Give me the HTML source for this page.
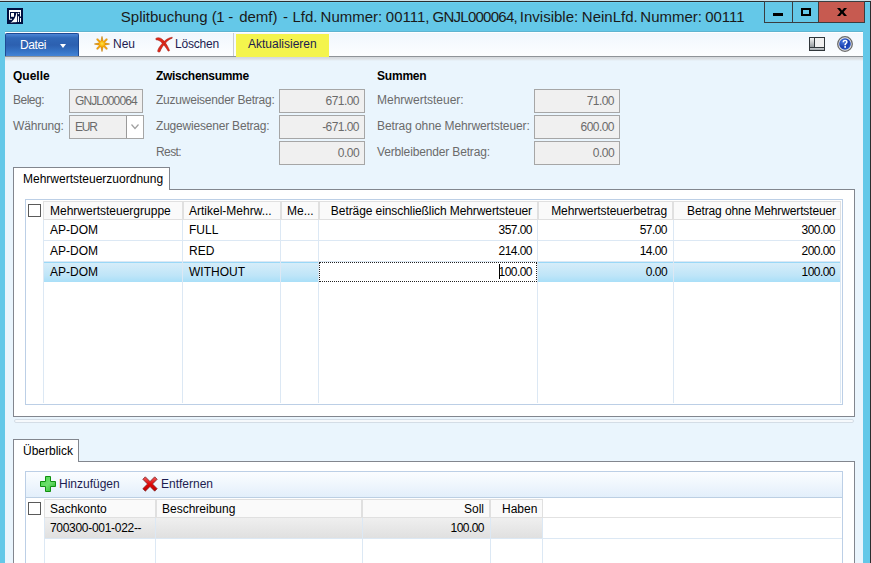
<!DOCTYPE html>
<html><head><meta charset="utf-8">
<style>
*{box-sizing:border-box;margin:0;padding:0}
html,body{width:871px;height:563px;overflow:hidden}
body{position:relative;background:#64c8e8;font-family:"Liberation Sans",sans-serif;font-size:12px;color:#000}
.a{position:absolute}
.t{position:absolute;white-space:nowrap;line-height:14px}
.lbl{color:#6b6b6b}
.fld{position:absolute;background:#f0f0f0;border:1px solid #a6a6a6;height:24px}
.fld span{position:absolute;right:5px;top:4px;line-height:14px;color:#6b6b6b;white-space:nowrap}
.hd{color:#000;font-weight:bold}
.tb{color:#1c1c50}
</style></head><body>
<div class="a" style="left:0px;top:0px;width:871px;height:1px;background:#cfdfe5;"></div>
<div class="a" style="left:0px;top:1px;width:871px;height:1px;background:#2b2d2f;"></div>
<div class="a" style="left:0px;top:2px;width:871px;height:1px;background:#6ad2f2;"></div>
<div class="a" style="left:870px;top:1px;width:1px;height:562px;background:#2b2d2f;"></div>
<svg class="a" style="left:7px;top:8px" width="16" height="16" viewBox="0 0 16 16">
<rect width="16" height="16" fill="#001040"/>
<path d="M2 2H14V8.6H13V4H3V10.8H5V11.8H2Z" fill="#fff"/>
<rect x="4" y="5" width="3" height="3.8" fill="#fff"/>
<path d="M3.2 14.8C5.8 13.6 8.2 10.5 9.4 5L10 5L10.2 13.9C8 14 5.2 14.4 3.2 14.8Z" fill="#fff"/>
<circle cx="11.5" cy="5.5" r="0.8" fill="#fff"/>
<rect x="11" y="8.3" width="1" height="5.7" fill="#fff"/>
<rect x="13" y="10" width="1" height="4" fill="#fff"/>
</svg>
<div class="t" style="left:120.8px;top:8px;font-size:15px;line-height:18px;color:#1a1a1a;letter-spacing:0px">Splitbuchung</div>
<div class="t" style="left:211.8px;top:8px;font-size:15px;line-height:18px;color:#1a1a1a;letter-spacing:-0.5px">(1</div>
<div class="t" style="left:228.3px;top:8px;font-size:15px;line-height:18px;color:#1a1a1a;letter-spacing:0px">-</div>
<div class="t" style="left:239.2px;top:8px;font-size:15px;line-height:18px;color:#1a1a1a;letter-spacing:0px">demf)</div>
<div class="t" style="left:283px;top:8px;font-size:15px;line-height:18px;color:#1a1a1a;letter-spacing:0px">-</div>
<div class="t" style="left:292.4px;top:8px;font-size:15px;line-height:18px;color:#1a1a1a;letter-spacing:0px">Lfd.</div>
<div class="t" style="left:320.6px;top:8px;font-size:15px;line-height:18px;color:#1a1a1a;letter-spacing:0px">Nummer:</div>
<div class="t" style="left:385.8px;top:8px;font-size:15px;line-height:18px;color:#1a1a1a;letter-spacing:0px">00111,</div>
<div class="t" style="left:432.6px;top:8px;font-size:15px;line-height:18px;color:#1a1a1a;letter-spacing:-0.75px">GNJL000064,</div>
<div class="t" style="left:519.8px;top:8px;font-size:15px;line-height:18px;color:#1a1a1a;letter-spacing:0px">Invisible:</div>
<div class="t" style="left:581.8px;top:8px;font-size:15px;line-height:18px;color:#1a1a1a;letter-spacing:0px">NeinLfd.</div>
<div class="t" style="left:640.3px;top:8px;font-size:15px;line-height:18px;color:#1a1a1a;letter-spacing:0px">Nummer:</div>
<div class="t" style="left:705.2px;top:8px;font-size:15px;line-height:18px;color:#1a1a1a;letter-spacing:0px">00111</div>
<div class="a" style="left:764px;top:1px;width:101px;height:22px;background:#3a3d40;"></div>
<div class="a" style="left:765px;top:2px;width:27px;height:20px;background:#64c8e8;"></div>
<div class="a" style="left:793px;top:2px;width:25px;height:20px;background:#64c8e8;"></div>
<div class="a" style="left:819px;top:2px;width:45px;height:20px;background:#c75a50;"></div>
<div class="a" style="left:773px;top:13px;width:10px;height:3px;background:#000;"></div>
<div class="a" style="left:801px;top:8px;width:10px;height:8px;background:transparent;border:2px solid #000;"></div>
<svg class="a" style="left:837px;top:8px" width="10" height="8" viewBox="0 0 10 8"><path d="M0 0H3L5 2.6L7 0H10L6.6 4L10 8H7L5 5.4L3 8H0L3.4 4Z" fill="#000"/></svg>
<div class="a" style="left:5px;top:31px;width:858px;height:1px;background:#5fb4d0;"></div>
<div class="a" style="left:5px;top:32px;width:858px;height:25px;background:linear-gradient(#f1f7fd,#fdfeff);border-top:1px solid #fff;"></div>
<div class="a" style="left:5px;top:56px;width:858px;height:1px;background:#8e9398;"></div>
<div class="a" style="left:5px;top:57px;width:858px;height:506px;background:#eaf5fd;"></div>
<div class="a" style="left:5px;top:57px;width:858px;height:4px;background:linear-gradient(#d3d7db,#dde1e5 50%,#eaf5fd);"></div>
<div class="a" style="left:5px;top:33px;width:74px;height:23px;background:linear-gradient(#4c86d6 0%,#3068b8 18%,#2c60b0 50%,#3674c6 80%,#4484d6 100%);border:1px solid #1e4a94;border-bottom:none;border-radius:2px 2px 0 0;"></div>
<div class="t" style="left:20px;top:38px;color:#fff;letter-spacing:-0.4px">Datei</div>
<div class="a" style="left:60px;top:44px;width:0;height:0;border-left:3.5px solid transparent;border-right:3.5px solid transparent;border-top:4px solid #fff"></div>
<div class="t tb" style="left:113px;top:37px;">Neu</div>
<div class="t tb" style="left:175px;top:37px;letter-spacing:-0.2px">Löschen</div>
<div class="a" style="left:233px;top:33px;width:1px;height:23px;background:#c8ccd0;"></div>
<div class="a" style="left:236px;top:34px;width:93px;height:23px;background:#f4f44c;"></div>
<div class="t tb" style="left:248px;top:37px;">Aktualisieren</div>
<svg class="a" style="left:94px;top:36px" width="16" height="16" viewBox="0 0 16 16">
<defs><radialGradient id="sg" cx="0.5" cy="0.45" r="0.5"><stop offset="0" stop-color="#ffe640"/><stop offset="1" stop-color="#f5a200"/></radialGradient></defs>
<g stroke="#c47a00" stroke-width="2.2" stroke-linecap="round" opacity="0.5"><path d="M3.4 3.4L12.6 12.6M12.6 3.4L3.4 12.6"/></g>
<g stroke="#f2a000" stroke-width="1.4" stroke-linecap="round"><path d="M3.4 3.4L12.6 12.6M12.6 3.4L3.4 12.6"/></g>
<path d="M8 0.4L9.4 6.6L15.6 8L9.4 9.4L8 15.6L6.6 9.4L0.4 8L6.6 6.6Z" fill="#f2a000" stroke="#c47a00" stroke-width="0.6" stroke-linejoin="round"/>
<circle cx="8" cy="8" r="3.2" fill="url(#sg)"/>
</svg>
<svg class="a" style="left:155px;top:36px" width="18" height="17" viewBox="0 0 18 17">
<path d="M0.8 2.5C3 0.8 6.2 1.8 8.8 4.8C11.2 7.6 13.2 11 14.6 14.6L13.2 15.2C11.3 11.8 8.8 8.7 6.8 6.7C4.8 4.7 2.8 3.8 1 3.8Z" fill="#e0281a" stroke="#9a1a10" stroke-width="0.5"/>
<path d="M17.2 1.2C13.2 1.6 9.8 4.4 7.2 7.4C4.6 10.5 2.8 13 2.6 15.3C3 16.3 4.6 16.3 5.2 15.4C5.8 13.2 7.4 10.6 9.4 8.2C11.5 5.6 14 3.2 17.2 2.2Z" fill="#e0281a" stroke="#9a1a10" stroke-width="0.5"/>
</svg>
<svg class="a" style="left:809px;top:37px" width="16" height="14" viewBox="0 0 16 14">
<defs><linearGradient id="lg1" x1="0" y1="0" x2="0" y2="1"><stop offset="0" stop-color="#f4f4f4"/><stop offset="1" stop-color="#8a9094"/></linearGradient>
<linearGradient id="lg2" x1="0" y1="0" x2="0" y2="1"><stop offset="0" stop-color="#c8ccd0"/><stop offset="1" stop-color="#a0a6aa"/></linearGradient></defs>
<rect x="0.5" y="0.5" width="15" height="13" fill="#f0f0f0" stroke="#30363a"/>
<rect x="1" y="1" width="4" height="10" fill="url(#lg1)"/>
<rect x="5" y="1" width="1" height="10" fill="#30363a"/>
<rect x="1" y="10" width="14" height="1" fill="#30363a"/>
<rect x="1" y="11" width="14" height="2" fill="url(#lg2)"/>
</svg>
<svg class="a" style="left:837px;top:36px" width="16" height="16" viewBox="0 0 16 16">
<defs><radialGradient id="hg" cx="0.35" cy="0.3" r="0.8"><stop offset="0" stop-color="#4a7ae0"/><stop offset="0.6" stop-color="#1a3fb0"/><stop offset="1" stop-color="#3060d0"/></radialGradient></defs>
<circle cx="8" cy="8" r="7.3" fill="#e8e8e8" stroke="#6a6a6a" stroke-width="1.3"/>
<circle cx="8" cy="8" r="5.8" fill="url(#hg)"/>
<path d="M5.6 6.2C5.6 4.6 6.7 3.8 8.1 3.8C9.6 3.8 10.6 4.7 10.6 5.9C10.6 7.4 9 7.6 8.9 9.3H7.3C7.2 7.3 9 7 9 6C9 5.5 8.7 5.1 8.1 5.1C7.5 5.1 7.2 5.6 7.2 6.2Z" fill="#fff"/>
<rect x="7.3" y="10.1" width="1.7" height="1.7" fill="#fff"/>
</svg>
<div class="t hd" style="left:13px;top:69px;">Quelle</div>
<div class="t lbl" style="left:13px;top:93px;letter-spacing:-0.5px">Beleg:</div>
<div class="t lbl" style="left:13px;top:119px;letter-spacing:-0.18px">Währung:</div>
<div class="fld" style="left:69px;top:89px;width:74px"><span style="left:5px;right:auto;letter-spacing:-0.9px">GNJL000064</span></div>
<div class="fld" style="left:69px;top:115px;width:75px"><span style="left:5px;right:auto;letter-spacing:-1.2px">EUR</span></div>
<div class="a" style="left:126px;top:116px;width:17px;height:22px;background:#fff;border-left:1px solid #9a9a9a;"></div>
<svg class="a" style="left:131px;top:124px" width="8" height="6" viewBox="0 0 8 6"><path d="M0.5 0.5L4 4.5L7.5 0.5" fill="none" stroke="#a0a0a0" stroke-width="1.2"/></svg>
<div class="t hd" style="left:156px;top:69px;letter-spacing:-0.3px">Zwischensumme</div>
<div class="t lbl" style="left:156px;top:93px;letter-spacing:-0.23px">Zuzuweisender Betrag:</div>
<div class="t lbl" style="left:156px;top:119px;letter-spacing:-0.2px">Zugewiesener Betrag:</div>
<div class="t lbl" style="left:156px;top:145px;letter-spacing:-0.6px">Rest:</div>
<div class="fld" style="left:279px;top:89px;width:86px"><span style="letter-spacing:-0.55px;">671.00</span></div>
<div class="fld" style="left:279px;top:115px;width:86px"><span style="letter-spacing:-0.55px;">-671.00</span></div>
<div class="fld" style="left:279px;top:141px;width:86px"><span style="letter-spacing:-0.55px;">0.00</span></div>
<div class="t hd" style="left:377px;top:69px;letter-spacing:-0.2px">Summen</div>
<div class="t lbl" style="left:377px;top:93px;">Mehrwertsteuer:</div>
<div class="t lbl" style="left:377px;top:119px;letter-spacing:-0.1px">Betrag ohne Mehrwertsteuer:</div>
<div class="t lbl" style="left:377px;top:145px;letter-spacing:-0.15px">Verbleibender Betrag:</div>
<div class="fld" style="left:534px;top:89px;width:86px"><span style="letter-spacing:-0.55px;">71.00</span></div>
<div class="fld" style="left:534px;top:115px;width:86px"><span style="letter-spacing:-0.55px;">600.00</span></div>
<div class="fld" style="left:534px;top:141px;width:86px"><span style="letter-spacing:-0.55px;">0.00</span></div>
<div class="a" style="left:13px;top:189px;width:842px;height:228px;background:#fff;border:1px solid #82868e;"></div>
<div class="a" style="left:13px;top:167px;width:157px;height:23px;background:#fff;border:1px solid #82868e;border-bottom:none;"></div>
<div class="t" style="left:23px;top:172px;">Mehrwertsteuerzuordnung</div>
<div class="a" style="left:25px;top:199px;width:818px;height:206px;background:#fff;border:1px solid #bccfe6;"></div>
<div class="a" style="left:28px;top:204px;width:13px;height:13px;background:#fff;border:1px solid #5a5a5a;"></div>
<div class="a" style="left:43px;top:201px;width:140px;height:19px;background:#fafafa;border:1px solid #e0e0e0;"></div>
<div class="a" style="left:183px;top:201px;width:98px;height:19px;background:#fafafa;border:1px solid #e0e0e0;"></div>
<div class="a" style="left:281px;top:201px;width:38px;height:19px;background:#fafafa;border:1px solid #e0e0e0;"></div>
<div class="a" style="left:319px;top:201px;width:219px;height:19px;background:#fafafa;border:1px solid #e0e0e0;"></div>
<div class="a" style="left:538px;top:201px;width:135px;height:19px;background:#fafafa;border:1px solid #e0e0e0;"></div>
<div class="a" style="left:673px;top:201px;width:168px;height:19px;background:#fafafa;border:1px solid #e0e0e0;"></div>
<div class="a" style="left:44px;top:262px;width:797px;height:20px;background:linear-gradient(#d6edf9,#bfe5f8 65%,#a9dff8);border-top:1px solid #9ad8f7;"></div>
<div class="a" style="left:43px;top:220px;width:1px;height:183px;background:#dce8f4;"></div>
<div class="a" style="left:182px;top:220px;width:1px;height:183px;background:#dce8f4;"></div>
<div class="a" style="left:280px;top:220px;width:1px;height:183px;background:#dce8f4;"></div>
<div class="a" style="left:318px;top:220px;width:1px;height:183px;background:#dce8f4;"></div>
<div class="a" style="left:537px;top:220px;width:1px;height:183px;background:#dce8f4;"></div>
<div class="a" style="left:673px;top:220px;width:1px;height:183px;background:#dce8f4;"></div>
<div class="a" style="left:44px;top:240px;width:797px;height:1px;background:#dce8f4;"></div>
<div class="a" style="left:44px;top:261px;width:797px;height:1px;background:#dce8f4;"></div>
<div class="a" style="left:840px;top:220px;width:1px;height:183px;background:#dce8f4;"></div>
<div class="a" style="left:319px;top:262px;width:218px;height:20px;background:#fff;border:1px dotted #222;"></div>
<div class="a" style="left:499px;top:264px;width:1px;height:15px;background:#000;"></div>
<div class="t" style="left:50px;top:204px;">Mehrwertsteuergruppe</div>
<div class="t" style="left:189px;top:204px;">Artikel-Mehrw...</div>
<div class="t" style="left:287px;top:204px;">Me...</div>
<div class="t" style="right:339px;top:204px;letter-spacing:-0.08px;">Beträge einschließlich Mehrwertsteuer</div>
<div class="t" style="right:204px;top:204px;letter-spacing:-0.08px;">Mehrwertsteuerbetrag</div>
<div class="t" style="right:35px;top:204px;letter-spacing:-0.12px;">Betrag ohne Mehrwertsteuer</div>
<div class="t" style="left:50px;top:223px;">AP-DOM</div>
<div class="t" style="left:189px;top:223px;">FULL</div>
<div class="t" style="right:339px;top:223px;letter-spacing:-0.55px;">357.00</div>
<div class="t" style="right:204px;top:223px;letter-spacing:-0.55px;">57.00</div>
<div class="t" style="right:36px;top:223px;letter-spacing:-0.55px;">300.00</div>
<div class="t" style="left:50px;top:244px;">AP-DOM</div>
<div class="t" style="left:189px;top:244px;">RED</div>
<div class="t" style="right:339px;top:244px;letter-spacing:-0.55px;">214.00</div>
<div class="t" style="right:204px;top:244px;letter-spacing:-0.55px;">14.00</div>
<div class="t" style="right:36px;top:244px;letter-spacing:-0.55px;">200.00</div>
<div class="t" style="left:50px;top:265px;">AP-DOM</div>
<div class="t" style="left:189px;top:265px;">WITHOUT</div>
<div class="t" style="right:339px;top:265px;letter-spacing:-0.55px;">100.00</div>
<div class="t" style="right:204px;top:265px;letter-spacing:-0.55px;">0.00</div>
<div class="t" style="right:36px;top:265px;letter-spacing:-0.55px;">100.00</div>
<div class="a" style="left:14px;top:419px;width:840px;height:4px;background:#f6f9fc;border:1px solid #d4dde6;border-radius:2px;"></div>
<div class="a" style="left:13px;top:461px;width:842px;height:120px;background:#fff;border:1px solid #82868e;"></div>
<div class="a" style="left:13px;top:439px;width:66px;height:23px;background:#fff;border:1px solid #82868e;border-bottom:none;"></div>
<div class="t" style="left:23px;top:444px;">Überblick</div>
<div class="a" style="left:25px;top:471px;width:818px;height:120px;background:#fff;border:1px solid #bccfe6;"></div>
<div class="a" style="left:26px;top:472px;width:816px;height:26px;background:linear-gradient(#fbfdff,#e3effb);border-bottom:1px solid #bccfe3;"></div>
<div class="t tb" style="left:59px;top:477px;">Hinzufügen</div>
<div class="t tb" style="left:161px;top:477px;">Entfernen</div>
<svg class="a" style="left:40px;top:476px" width="16" height="16" viewBox="0 0 16 16">
<defs><linearGradient id="pg" x1="0" y1="0" x2="1" y2="1"><stop offset="0" stop-color="#40d040"/><stop offset="0.5" stop-color="#70e070"/><stop offset="1" stop-color="#20b020"/></linearGradient></defs>
<path d="M5.5 0.5H10.5V5.5H15.5V10.5H10.5V15.5H5.5V10.5H0.5V5.5H5.5Z" fill="url(#pg)" stroke="#109010" stroke-width="1"/>
</svg>
<svg class="a" style="left:142px;top:476px" width="16" height="16" viewBox="0 0 16 16">
<defs><linearGradient id="rg" x1="0" y1="0" x2="0" y2="1"><stop offset="0" stop-color="#f06060"/><stop offset="0.5" stop-color="#e00808"/><stop offset="1" stop-color="#c00000"/></linearGradient></defs>
<path d="M0.8 3.3L3.3 0.8L8 5.5L12.7 0.8L15.2 3.3L10.5 8L15.2 12.7L12.7 15.2L8 10.5L3.3 15.2L0.8 12.7L5.5 8Z" fill="url(#rg)" stroke="#702020" stroke-width="0.7" stroke-linejoin="round"/>
</svg>
<div class="a" style="left:28px;top:502px;width:13px;height:13px;background:#fff;border:1px solid #5a5a5a;"></div>
<div class="a" style="left:44px;top:517px;width:797px;height:1px;background:#e2e2e2;"></div>
<div class="a" style="left:44px;top:499px;width:112px;height:19px;background:#fafafa;border:1px solid #e0e0e0;"></div>
<div class="a" style="left:156px;top:499px;width:206px;height:19px;background:#fafafa;border:1px solid #e0e0e0;"></div>
<div class="a" style="left:362px;top:499px;width:128px;height:19px;background:#fafafa;border:1px solid #e0e0e0;"></div>
<div class="a" style="left:490px;top:499px;width:53px;height:19px;background:#fafafa;border:1px solid #e0e0e0;"></div>
<div class="a" style="left:44px;top:518px;width:498px;height:20px;background:linear-gradient(#efefef,#e0e0e0);"></div>
<div class="a" style="left:44px;top:538px;width:798px;height:1px;background:#dce8f4;"></div>
<div class="a" style="left:44px;top:518px;width:1px;height:45px;background:#dce8f4;"></div>
<div class="a" style="left:155px;top:518px;width:1px;height:45px;background:#dce8f4;"></div>
<div class="a" style="left:362px;top:518px;width:1px;height:45px;background:#dce8f4;"></div>
<div class="a" style="left:490px;top:518px;width:1px;height:45px;background:#dce8f4;"></div>
<div class="a" style="left:542px;top:518px;width:1px;height:45px;background:#dce8f4;"></div>
<div class="t" style="left:50px;top:502px;">Sachkonto</div>
<div class="t" style="left:162px;top:502px;">Beschreibung</div>
<div class="t" style="right:387px;top:502px;">Soll</div>
<div class="t" style="left:502px;top:502px;">Haben</div>
<div class="t" style="left:50px;top:521px;letter-spacing:-0.3px">700300-001-022--</div>
<div class="t" style="right:387px;top:521px;letter-spacing:-0.55px;">100.00</div>
</body></html>
